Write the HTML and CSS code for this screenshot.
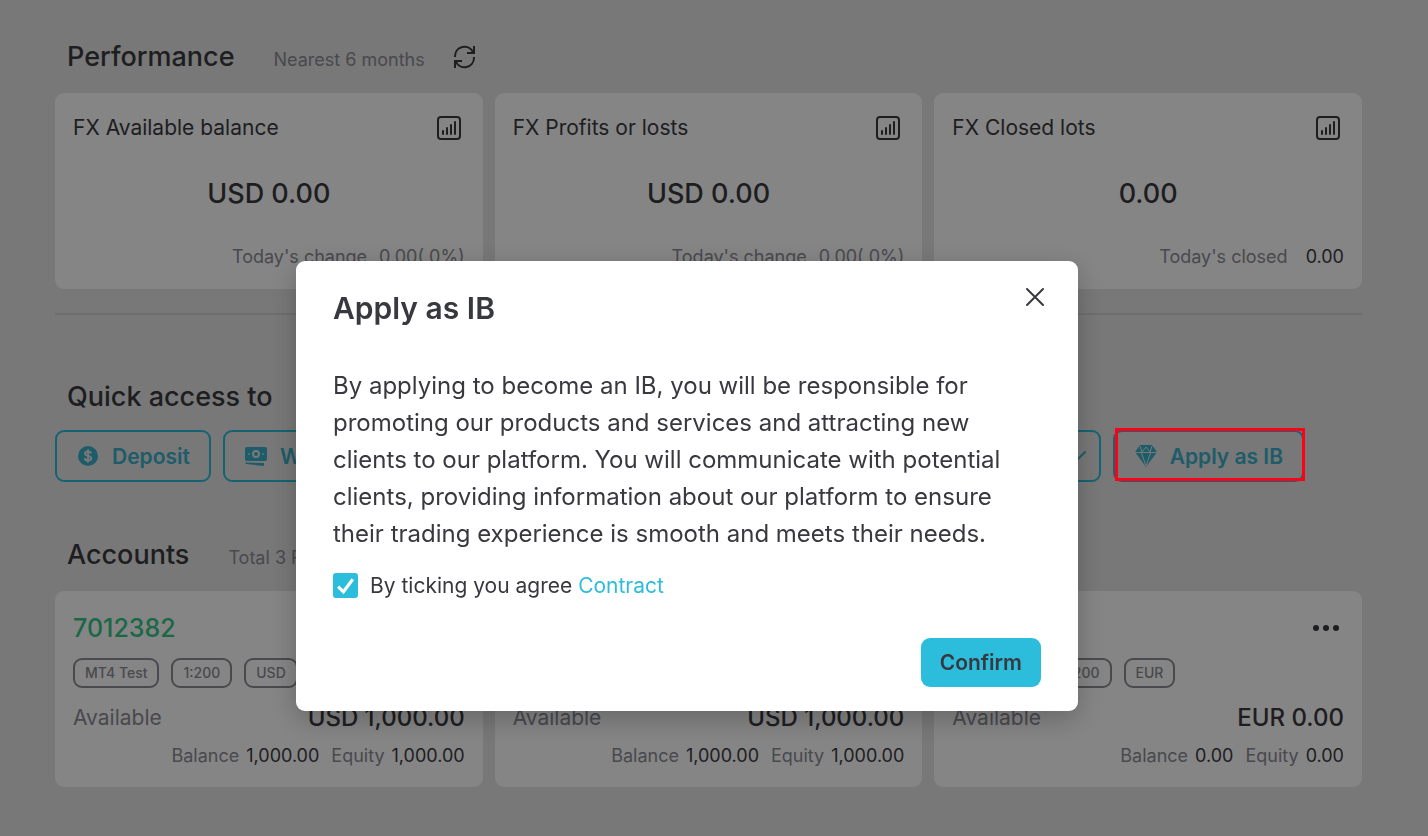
FILE: index.html
```html
<!DOCTYPE html>
<html lang="en">
<head>
    <meta charset="UTF-8">
    <meta name="viewport" content="width=device-width, initial-scale=1.0">
    <title>Apply as IB</title>
    <link rel="stylesheet" href="styles.css">
</head>
<body>
    <!-- Shared icons -->
    <svg class="sprite" aria-hidden="true">
        <symbol id="icon-chart" viewBox="0 0 24 24">
            <rect x="1" y="1" width="22" height="22" rx="3" fill="none" stroke="currentColor" stroke-width="2"/>
            <path d="M6 18v-3M10 18v-6M14 18V9M18 18V6" fill="none" stroke="currentColor" stroke-width="2" stroke-linecap="round"/>
        </symbol>
        <symbol id="icon-dots" viewBox="0 0 26 8">
            <circle cx="3" cy="4" r="3" fill="currentColor"/>
            <circle cx="13" cy="4" r="3" fill="currentColor"/>
            <circle cx="23" cy="4" r="3" fill="currentColor"/>
        </symbol>
    </svg>

    <main class="page">
        <div class="section-head">
            <h2>Performance</h2>
            <span class="note">Nearest 6 months</span>
            <button class="icon-button refresh" aria-label="Refresh">
                <svg width="24" height="24" viewBox="0 0 24 24" fill="none" stroke="currentColor" stroke-width="2" stroke-linecap="square">
                    <path d="M2 11a9.500 9.500 0 0 1 18-4M21 2v6h-6"/>
                    <path d="M21 13a9.500 9.500 0 0 1-18 4M2 22v-6h6"/>
                </svg>
            </button>
        </div>

        <div class="cards">
            <section class="card stat">
                <div class="card-top">
                    <h3>FX Available balance</h3>
                    <button class="icon-button" aria-label="Show chart"><svg width="24" height="24"><use href="#icon-chart"/></svg></button>
                </div>
                <p class="amount">USD 0.00</p>
                <p class="today"><span>Today's change</span> <span>0.00( 0%)</span></p>
            </section>
            <section class="card stat">
                <div class="card-top">
                    <h3>FX Profits or losts</h3>
                    <button class="icon-button" aria-label="Show chart"><svg width="24" height="24"><use href="#icon-chart"/></svg></button>
                </div>
                <p class="amount">USD 0.00</p>
                <p class="today"><span>Today's change</span> <span>0.00( 0%)</span></p>
            </section>
            <section class="card stat">
                <div class="card-top">
                    <h3>FX Closed lots</h3>
                    <button class="icon-button" aria-label="Show chart"><svg width="24" height="24"><use href="#icon-chart"/></svg></button>
                </div>
                <p class="amount">0.00</p>
                <p class="today closed"><span>Today's closed</span> <b>0.00</b></p>
            </section>
        </div>

        <hr>

        <div class="section-head quick-head">
            <h2>Quick access to</h2>
        </div>
        <div class="quick">
            <button class="quick-button">
                <svg width="24" height="24" viewBox="0 0 24 24">
                    <circle cx="12" cy="12" r="10" fill="currentColor"/>
                    <path class="cut" d="M15 9.500c-.3-1.300-1.400-2-3-2s-3 .8-3 2.100c0 3.200 6.200 1.400 6.200 4.600 0 1.400-1.300 2.300-3.200 2.300s-3.200-.9-3.300-2.400M12 5.500v13"/>
                </svg>
                Deposit
            </button>
            <button class="quick-button">
                <svg width="24" height="24" viewBox="0 0 24 24">
                    <rect x="1" y="3" width="22" height="14" rx="2" fill="currentColor"/>
                    <path d="M1 18.500l19 .5v3L2 20z" fill="currentColor"/>
                    <circle class="cut" cx="12" cy="10" r="3"/>
                    <path class="cut" d="M4.500 10h1M18.500 10h1"/>
                </svg>
                Withdraw
            </button>
            <button class="quick-button">Transfer</button>
            <button class="quick-button more">
                Open account
                <svg width="12" height="24" viewBox="0 0 12 24" fill="none" stroke="currentColor" stroke-width="2" stroke-linecap="round">
                    <path d="M1 11l3 4 7-7"/>
                </svg>
            </button>
            <button class="quick-button marked">
                <svg width="24" height="24" viewBox="0 0 24 24">
                    <path d="M6 1h12l5 7-11 15L1 8z" fill="currentColor"/>
                    <path class="facet" d="M1 8.500h22M6 2l2 6 4-5 4 5 2-6M7.500 9L12 22l4.500-13"/>
                </svg>
                Apply as IB
            </button>
        </div>

        <div class="section-head accounts-head">
            <h2>Accounts</h2>
            <span class="note">Total 3 Records</span>
        </div>
        <div class="cards">
            <section class="card account">
                <div class="card-top">
                    <h3>7012382</h3>
                    <button class="icon-button" aria-label="More"><svg width="26" height="8"><use href="#icon-dots"/></svg></button>
                </div>
                <div class="tags"><span>MT4 Test</span><span>1:200</span><span>USD</span></div>
                <div class="available"><span>Available</span><b>USD 1,000.00</b></div>
                <p class="totals"><span>Balance <b>1,000.00</b></span><span>Equity <b>1,000.00</b></span></p>
            </section>
            <section class="card account">
                <div class="card-top">
                    <h3>7012383</h3>
                    <button class="icon-button" aria-label="More"><svg width="26" height="8"><use href="#icon-dots"/></svg></button>
                </div>
                <div class="tags"><span>MT4 Test</span><span>1:200</span><span>USD</span></div>
                <div class="available"><span>Available</span><b>USD 1,000.00</b></div>
                <p class="totals"><span>Balance <b>1,000.00</b></span><span>Equity <b>1,000.00</b></span></p>
            </section>
            <section class="card account">
                <div class="card-top">
                    <h3>7012384</h3>
                    <button class="icon-button" aria-label="More"><svg width="26" height="8"><use href="#icon-dots"/></svg></button>
                </div>
                <div class="tags"><span>MT4 Test</span><span>1:200</span><span>EUR</span></div>
                <div class="available"><span>Available</span><b>EUR 0.00</b></div>
                <p class="totals"><span>Balance <b>0.00</b></span><span>Equity <b>0.00</b></span></p>
            </section>
        </div>
    </main>

    <!-- Apply dialog -->
    <div class="overlay">
        <div class="modal" role="dialog" aria-modal="true" aria-labelledby="modal-title">
            <div class="modal-head">
                <h1 id="modal-title">Apply as IB</h1>
                <button class="icon-button close" aria-label="Close">
                    <svg width="20" height="20" viewBox="0 0 20 20" fill="none" stroke="currentColor" stroke-width="2" stroke-linecap="round">
                        <path d="M2 2l16 16M18 2L2 18"/>
                    </svg>
                </button>
            </div>
            <p class="modal-text">By applying to become an IB, you will be responsible for promoting our products and services and attracting new clients to our platform. You will communicate with potential clients, providing information about our platform to ensure their trading experience is smooth and meets their needs.</p>
            <div class="agree">
                <span class="check">
                    <input type="checkbox" id="agree" checked>
                    <svg viewBox="0 0 24 24" fill="none" stroke="currentColor" stroke-width="3"><path d="M5 13l5 5L19 6"/></svg>
                </span>
                <span><label for="agree">By ticking you agree</label> <a href="#contract">Contract</a></span>
            </div>
            <div class="modal-foot">
                <button class="confirm">Confirm</button>
            </div>
        </div>
    </div>
</body>
</html>
```

FILE: styles.css
```css
* {
    box-sizing: border-box;
}

body {
    margin: 0;
    min-height: 100vh;
    background: #e6e6e6;
    color: #3b3b3f;
    font-family: Inter, sans-serif;
    font-size: 18px;
    line-height: 24px;
}

h1, h2, h3, p {
    margin: 0;
}

b {
    font-weight: 400;
}

button {
    font-family: inherit;
    cursor: pointer;
}

.sprite {
    display: none;
}

.page {
    padding: 37px 66px 48px 55px;
}

.icon-button {
    display: flex;
    padding: 0;
    border: none;
    background: none;
    color: inherit;
}

/* Section headings */
.section-head {
    display: flex;
    align-items: center;
    height: 40px;
    padding-left: 12px;
}

.section-head h2 {
    font-size: 27px;
    font-weight: 500;
    line-height: 40px;
}

.note {
    margin-left: 39px;
    padding-top: 5px;
    color: #8c8c96;
}

.refresh {
    margin-left: 28px;
}

/* Cards */
.cards {
    display: grid;
    grid-template-columns: repeat(3, 1fr);
    gap: 12px;
    margin-top: 16px;
}

.card {
    display: flex;
    flex-direction: column;
    height: 196px;
    padding: 18px;
    background: #fff;
    border-radius: 9px;
}

.card-top {
    display: flex;
    align-items: center;
    justify-content: space-between;
    height: 34px;
    padding-right: 4px;
}

.stat h3 {
    font-size: 21px;
    font-weight: 400;
}

.amount {
    margin-top: 31px;
    font-size: 27px;
    font-weight: 500;
    line-height: 36px;
    text-align: center;
}

.today {
    display: flex;
    justify-content: flex-end;
    gap: 12px;
    margin-top: 33px;
    color: #8c8c96;
}

.today b {
    color: #3b3b3f;
}

.closed {
    gap: 18px;
}

hr {
    height: 2px;
    margin: 24px 0 0;
    border: none;
    background: #d4d4d8;
}

/* Quick access */
.quick-head {
    margin-top: 62px;
}

.quick {
    display: flex;
    gap: 12px;
    margin-top: 13px;
}

.quick-button {
    display: flex;
    align-items: center;
    gap: 12px;
    height: 52px;
    padding: 0 19px;
    border: 2px solid #2dbddc;
    border-radius: 9px;
    background: none;
    color: #3ab0cc;
    font-size: 21px;
    font-weight: 600;
    white-space: nowrap;
}

.cut {
    fill: none;
    stroke: #e6e6e6;
    stroke-width: 2;
}

.facet {
    fill: none;
    stroke: #e6e6e6;
    stroke-width: 1;
}

.more {
    flex: 1;
    justify-content: space-between;
    padding-right: 13px;
}

.marked {
    position: relative;
    margin-right: 58px;
}

.marked::after {
    content: "";
    position: absolute;
    inset: -4px -3px -1px 0;
    z-index: 20;
    border: 3px solid #ff0016;
}

/* Accounts */
.accounts-head {
    margin-top: 53px;
}

.account h3 {
    color: #34c789;
    font-size: 25px;
    font-weight: 500;
}

.account .card-top {
    height: 38px;
    padding-right: 5px;
}

.tags {
    display: flex;
    gap: 12px;
    margin-top: 11px;
}

.tags span {
    height: 30px;
    padding: 0 10px;
    border: 2px solid #8c8c96;
    border-radius: 9px;
    color: #8c8c96;
    font-size: 14px;
    font-weight: 500;
    line-height: 26px;
}

.available {
    display: flex;
    justify-content: space-between;
    margin-top: 13px;
    color: #8c8c96;
    font-size: 21px;
    line-height: 34px;
}

.available b {
    color: #3b3b3f;
    font-size: 24px;
    font-weight: 500;
}

.totals {
    display: flex;
    justify-content: flex-end;
    gap: 12px;
    margin-top: 9px;
    color: #8c8c96;
}

.totals span {
    display: flex;
    gap: 7px;
}

.totals b {
    color: #3b3b3f;
}

/* Dialog */
.overlay {
    position: fixed;
    inset: 0;
    z-index: 10;
    display: flex;
    align-items: flex-start;
    justify-content: center;
    padding: 261px 54px 0 0;
    background: rgba(0, 0, 0, 0.48);
}

.modal {
    width: 782px;
    padding: 24px 37px;
    border-radius: 9px;
    background: #fff;
    box-shadow: 0 8px 28px rgba(0, 0, 0, 0.24);
    color: #38383f;
}

.modal-head {
    display: flex;
    align-items: flex-start;
    justify-content: space-between;
}

.modal-head h1 {
    font-size: 30px;
    font-weight: 600;
    line-height: 46px;
}

.close {
    margin: 2px -4px 0 0;
}

.modal-text {
    margin-top: 36px;
    font-size: 24px;
    line-height: 37px;
}

.agree {
    display: flex;
    align-items: center;
    gap: 12px;
    margin-top: 21px;
    font-size: 21px;
}

.agree a {
    color: #2dbddc;
    text-decoration: none;
}

.check {
    position: relative;
    width: 25px;
    height: 25px;
    color: #fff;
}

.check input {
    appearance: none;
    display: block;
    width: 100%;
    height: 100%;
    margin: 0;
    border: 2px solid #2dbddc;
    border-radius: 3px;
}

.check input:checked {
    background: #2dbddc;
}

.check svg {
    position: absolute;
    inset: 0;
    pointer-events: none;
}

.modal-foot {
    display: flex;
    justify-content: flex-end;
    margin-top: 40px;
}

.confirm {
    height: 49px;
    padding: 0 19px;
    border: none;
    border-radius: 9px;
    background: #2dbddc;
    color: #38383f;
    font-size: 21px;
    font-weight: 600;
}
```
